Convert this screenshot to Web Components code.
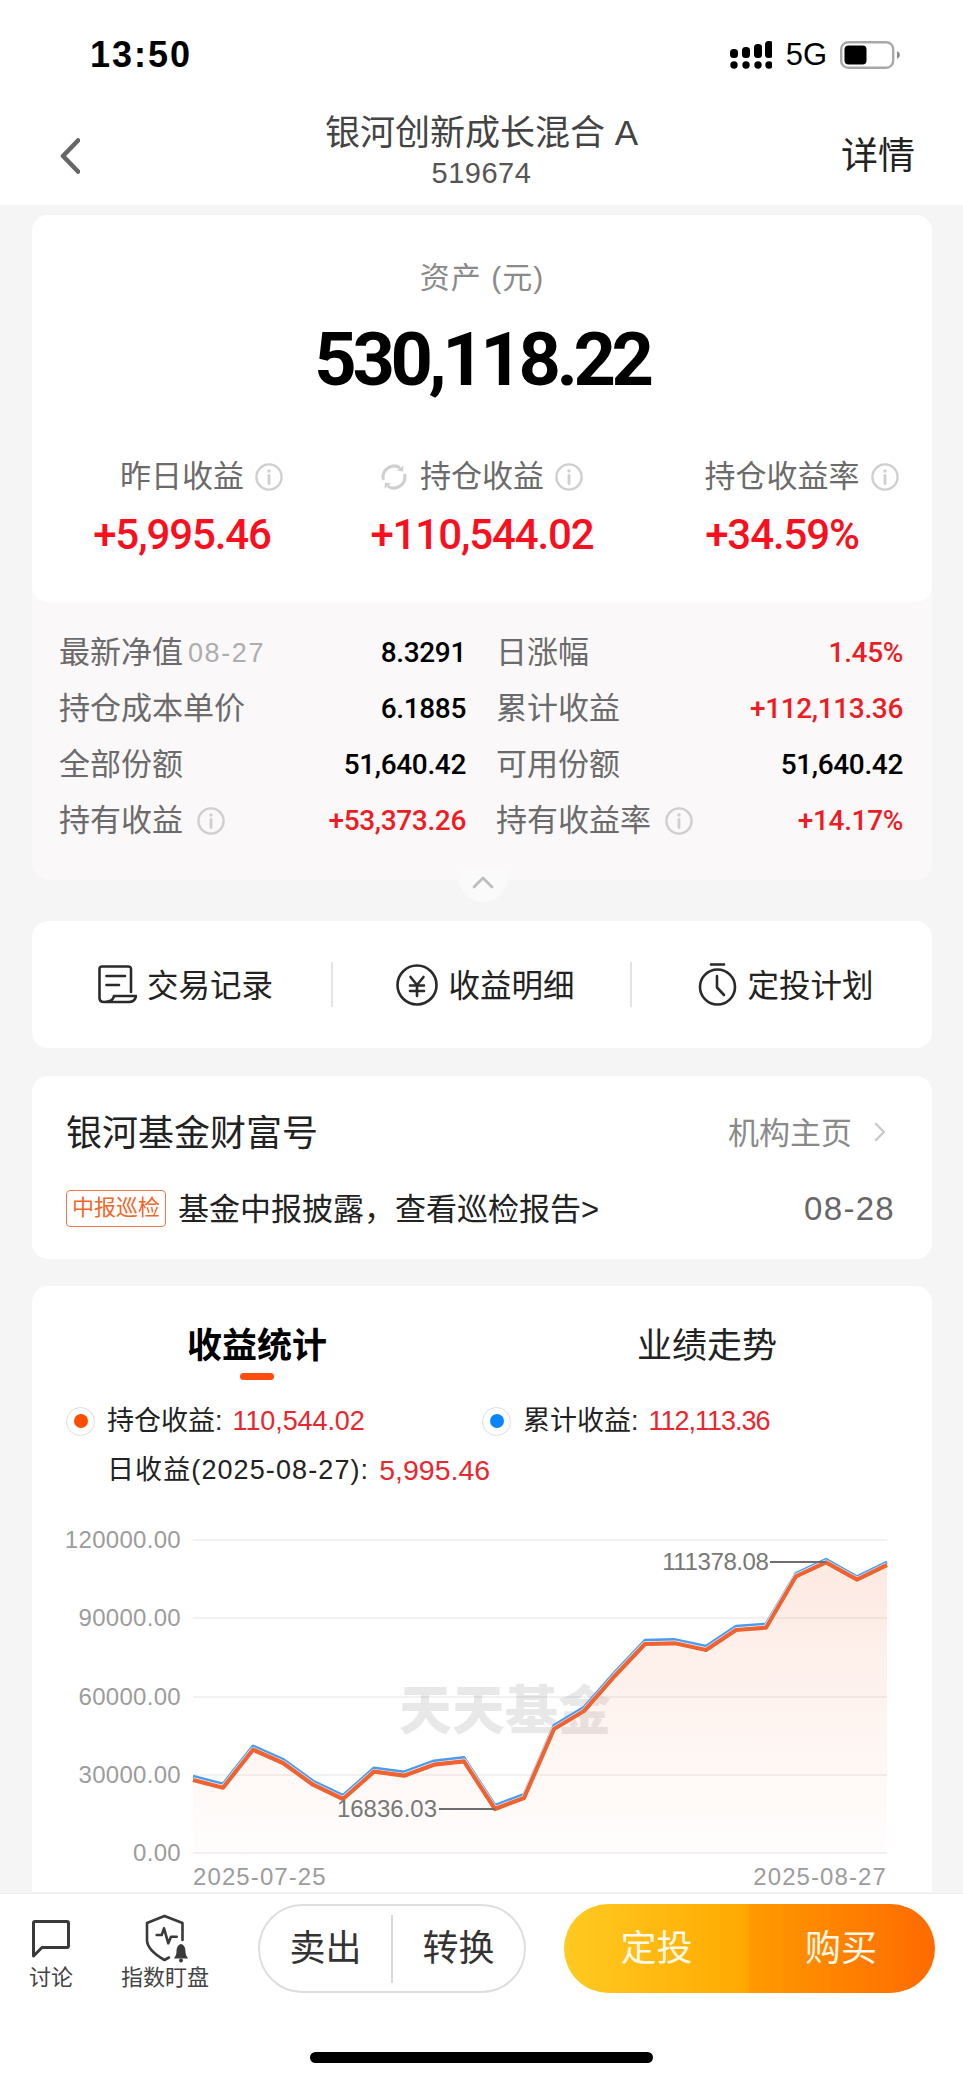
<!DOCTYPE html>
<html lang="zh-CN">
<head>
<meta charset="utf-8">
<title>银河创新成长混合 A</title>
<style>
  html, body { margin: 0; padding: 0; background: #f5f5f5; }
  body { font-family: "Liberation Sans", "Noto Sans CJK SC", sans-serif; }
</style>
</head>
<body>
<fund-screen></fund-screen>

<script>
const sans = '"Liberation Sans", "Noto Sans CJK SC", sans-serif';
const digits = 'Roboto, "Noto Sans CJK SC", sans-serif';

class InfoDot extends HTMLElement {
  constructor() {
    super();
    this.attachShadow({mode: 'open'}).innerHTML = `
      <style>:host { display: inline-flex; width: 28px; height: 28px; flex: none; }</style>
      <svg width="28" height="28" viewBox="0 0 28 28" fill="none" stroke="#cfcfcf">
        <circle cx="14" cy="14" r="12.6" stroke-width="2.4"/>
        <path d="M14 12.5V20.5" stroke-width="2.8" stroke-linecap="round"/>
        <circle cx="14" cy="8" r="1.7" fill="#cfcfcf" stroke="none"/>
      </svg>`;
  }
}
customElements.define('info-dot', InfoDot);

class StatusBar extends HTMLElement {
  constructor() {
    super();
    this.attachShadow({mode: 'open'}).innerHTML = `
      <style>
        :host { display: flex; align-items: center; height: 74px; padding: 18px 63px 0 90px; background: #fff; font-family: ${sans}; color: #000; }
        .time { font-size: 36px; font-weight: 700; flex: 1; letter-spacing: 2px; }
        .net { font-size: 31px; margin: 0 13px 0 14px; }
        svg { display: block; }
      </style>
      <span class="time">13:50</span>
      <svg width="42" height="28" viewBox="0 0 42 28" fill="#000">
        <rect x="0" y="8" width="8" height="9" rx="3.5"/><rect x="12" y="6" width="8" height="11" rx="3.5"/>
        <rect x="24" y="3" width="8" height="14" rx="3.5"/><rect x="35" y="0" width="8" height="17" rx="3.5"/>
        <circle cx="4" cy="24" r="3.7"/><circle cx="16" cy="24" r="3.7"/><circle cx="28" cy="24" r="3.7"/><circle cx="39" cy="24" r="3.7"/>
      </svg>
      <span class="net">5G</span>
      <svg width="60" height="28" viewBox="0 0 60 28">
        <rect x="1.2" y="1.2" width="52" height="25.6" rx="7" fill="none" stroke="#a8a8a8" stroke-width="2.4"/>
        <rect x="4.5" y="4.5" width="22" height="19" rx="4" fill="#000"/>
        <path d="M57 10V18Q60 16.5 60 14Q60 11.500 57 10Z" fill="#8a8a8a"/>
      </svg>`;
  }
}
customElements.define('status-bar', StatusBar);

class NavHeader extends HTMLElement {
  constructor() {
    super();
    this.attachShadow({mode: 'open'}).innerHTML = `
      <style>
        :host { display: grid; grid-template-columns: 1fr auto 1fr; height: 94px; padding-top: 19px; background: #fff; font-family: ${sans}; }
        .back { margin: 27px 0 0 60px; }
        .mid { text-align: center; }
        .name { font-size: 35px; line-height: 44px; color: #444; }
        .code { font-size: 29px; line-height: 36px; color: #555; letter-spacing: .5px; }
        .more { justify-self: end; margin: 23px 48px 0 0; font-size: 37px; line-height: 46px; color: #222; }
      </style>
      <svg class="back" width="20" height="36" viewBox="0 0 20 36" fill="none" stroke="#666" stroke-width="4.6" stroke-linecap="round" stroke-linejoin="round"><path d="M18 2.500L3 18L18 33.500"/></svg>
      <div class="mid"><div class="name"><slot name="name"></slot></div><div class="code"><slot name="code"></slot></div></div>
      <div class="more">详情</div>`;
  }
}
customElements.define('nav-header', NavHeader);

class StatCell extends HTMLElement {
  constructor() {
    super();
    const spin = this.hasAttribute('spin') ? `
      <svg width="30" height="30" viewBox="0 0 30 30" fill="none" stroke="#cfcfcf" stroke-width="3">
        <path d="M4.500 18A11 11 0 0 1 21 5.800"/><path d="M25.500 12A11 11 0 0 1 9 24.200"/>
        <path d="M24.500 3.500L24 9.500L18 8.500Z" fill="#cfcfcf" stroke="none"/><path d="M5.500 26.500L6 20.500L12 21.500Z" fill="#cfcfcf" stroke="none"/>
      </svg>` : '';
    this.attachShadow({mode: 'open'}).innerHTML = `
      <style>
        :host { display: block; font-family: ${sans}; }
        .top { display: grid; grid-template-columns: 1fr auto 1fr; align-items: center; height: 40px; column-gap: 11px; }
        .pre { justify-self: end; display: flex; }
        .label { font-size: 31px; line-height: 40px; color: #6b6b6b; }
        .val { margin-top: 13px; text-align: center; font-family: ${digits}; font-size: 42px; line-height: 50px; font-weight: 500; letter-spacing: -1.1px; color: #fa0f1e; }
      </style>
      <div class="top"><span class="pre">${spin}</span><span class="label">${this.getAttribute('label')}</span><info-dot></info-dot></div>
      <div class="val">${this.getAttribute('value')}</div>`;
  }
}
customElements.define('stat-cell', StatCell);

class DetailItem extends HTMLElement {
  constructor() {
    super();
    const note = this.getAttribute('note');
    const info = this.hasAttribute('info') ? '<info-dot></info-dot>' : '';
    const tone = this.getAttribute('tone') === 'red' ? '#ee1c25' : '#000';
    this.attachShadow({mode: 'open'}).innerHTML = `
      <style>
        :host { display: flex; align-items: center; height: 56px; font-family: ${sans}; }
        span { line-height: 40px; }
        .label { font-size: 31px; color: #6b6b6b; }
        .note { font-size: 27px; color: #adadad; margin-left: 5px; letter-spacing: 1.6px; }
        info-dot { margin-left: 14px; }
        .val { margin-left: auto; font-family: ${digits}; font-size: 28px; font-weight: 500; letter-spacing: -.35px; color: ${tone}; }
      </style>
      <span class="label">${this.getAttribute('label')}</span>
      ${note ? `<span class="note">${note}</span>` : ''}${info}
      <span class="val">${this.getAttribute('value')}</span>`;
  }
}
customElements.define('detail-item', DetailItem);

class AssetCard extends HTMLElement {
  constructor() {
    super();
    this.attachShadow({mode: 'open'}).innerHTML = `
      <style>
        :host { display: block; position: relative; border-radius: 16px; background: #faf8f9; font-family: ${sans}; }
        .top { background: #fff; border-radius: 16px; padding: 43px 0 42px; text-align: center; }
        .cap { font-size: 30px; line-height: 40px; letter-spacing: 1px; color: #8a8a8a; }
        .total { margin-top: 22px; font-family: ${digits}; font-weight: 700; font-size: 74px; line-height: 80px; letter-spacing: -4.4px; color: #000; }
        .stats { display: grid; grid-template-columns: repeat(3, 300px); margin-top: 57px; }
        .more { display: grid; grid-template-columns: 407px 407px; column-gap: 30px; padding: 23px 29px 31px 27px; }
        .fold { position: absolute; left: 426px; top: 100%; margin-top: -12px; width: 50px; height: 34px; border-radius: 0 0 25px 25px; background: #fafafa; }
        .fold svg { position: absolute; left: 14px; top: 8px; }
      </style>
      <div class="top">
        <div class="cap">资产 (元)</div>
        <div class="total">530,118.22</div>
        <div class="stats">
          <stat-cell label="昨日收益" value="+5,995.46"></stat-cell>
          <stat-cell label="持仓收益" value="+110,544.02" spin></stat-cell>
          <stat-cell label="持仓收益率" value="+34.59%"></stat-cell>
        </div>
      </div>
      <div class="more"><slot></slot></div>
      <div class="fold"><svg width="22" height="13" viewBox="0 0 22 13" fill="none" stroke="#bdbdbd" stroke-width="2.8" stroke-linecap="round" stroke-linejoin="round"><path d="M2 11L11 2L20 11"/></svg></div>`;
  }
}
customElements.define('asset-card', AssetCard);

class ActionBar extends HTMLElement {
  constructor() {
    super();
    this.attachShadow({mode: 'open'}).innerHTML = `
      <style>
        :host { display: flex; align-items: center; height: 127px; margin-top: 41px; background: #fff; border-radius: 16px; font-family: ${sans}; }
        .cell { display: flex; align-items: center; justify-content: center; gap: 10px; width: 299px; height: 45px; padding-left: 8px; box-sizing: border-box; font-size: 31.5px; line-height: 40px; color: #222; }
        .cell:last-child { width: 302px; }
        .cell + .cell { border-left: 2px solid #e4e4e4; }
        .cell b { font-weight: 400; padding-top: 2px; }
      </style>
      <div class="cell">
        <svg width="39" height="39" viewBox="0 0 39 39" fill="none" stroke="#2a2a2a" stroke-width="2.6" stroke-linecap="round" stroke-linejoin="round">
          <path d="M33 27V4Q33 1.500 30 1.500H4Q1.500 1.500 1.500 4V33Q1.500 37 6 37H31Q37 37 38 31H16Q15 37 6 37"/>
          <path d="M8.500 11H27M8.500 20H21"/>
        </svg><b>交易记录</b></div>
      <div class="cell">
        <svg width="42" height="42" viewBox="0 0 42 42" fill="none" stroke="#2a2a2a" stroke-width="2.600" stroke-linecap="round" stroke-linejoin="round">
          <circle cx="21" cy="21" r="19.500"/>
          <path d="M14.500 13L21 21L27.500 13M14 21.500H28M14 27H28M21 21.500V32"/>
        </svg><b>收益明细</b></div>
      <div class="cell">
        <svg width="39" height="43" viewBox="0 0 39 43" fill="none" stroke="#2a2a2a" stroke-width="2.600" stroke-linecap="round" stroke-linejoin="round">
          <path d="M13 1.500H26"/><circle cx="19.500" cy="24" r="17.500"/><path d="M19 13V24.500L26 32"/>
        </svg><b>定投计划</b></div>`;
  }
}
customElements.define('action-bar', ActionBar);

class OrgCard extends HTMLElement {
  constructor() {
    super();
    this.attachShadow({mode: 'open'}).innerHTML = `
      <style>
        :host { display: block; margin-top: 28px; padding: 31px 37px 32px 34px; background: #fff; border-radius: 16px; font-family: ${sans}; }
        .head { display: flex; align-items: center; height: 50px; padding-right: 9px; }
        .title { flex: 1; font-size: 36px; line-height: 50px; padding-top: 4px; color: #222; }
        .link { font-size: 31px; line-height: 40px; padding-top: 3px; color: #8a8a8a; margin-right: 22px; }
        .notice { display: flex; align-items: center; height: 37px; margin-top: 33px; }
        .tag { width: 100px; height: 37px; box-sizing: border-box; border: 1.500px solid #f3784a; border-radius: 4px; font-size: 22px; line-height: 34px; text-align: center; color: #f2662a; margin-right: 12px; }
        .msg { flex: 1; font-size: 31px; line-height: 37px; padding-top: 2px; color: #222; white-space: nowrap; }
        .date { font-size: 33px; line-height: 37px; color: #666; letter-spacing: 1.300px; }
      </style>
      <div class="head"><span class="title">银河基金财富号</span><span class="link">机构主页</span>
        <svg width="12" height="20" viewBox="0 0 12 20" fill="none" stroke="#c9c9c9" stroke-width="2.400" stroke-linecap="round" stroke-linejoin="round"><path d="M2 2L10 10L2 18"/></svg>
      </div>
      <div class="notice"><span class="tag">中报巡检</span><span class="msg">基金中报披露，查看巡检报告&gt;</span><span class="date">08-28</span></div>`;
  }
}
customElements.define('org-card', OrgCard);

const orange = [[193,1781],[223,1788.7],[253,1750.7],[283,1764],[313,1785.7],[343,1800],[374,1772.7],[404,1776.7],[434,1765.7],[464,1762.3],[495,1810],[524,1799],[554,1730],[584,1712],[615,1676.7],[645,1645],[675,1644.3],[706,1651],[736,1631],[766,1628.7],[796,1577.3],[826,1563.3],[857,1580.7],[887,1566]];

class ChartCard extends HTMLElement {
  constructor() {
    super();
    const line = orange.map(p => p.join(',')).join(' ');
    const blue = orange.map((p, i) => p[0] + ',' + (p[1] - (i > 19 ? 3 : 3.7))).join(' ');
    const grid = [[1541,'120000.00'],[1619,'90000.00'],[1698,'60000.00'],[1776,'30000.00'],[1854,'0.00']];
    this.attachShadow({mode: 'open'}).innerHTML = `
      <style>
        :host { display: block; margin-top: 27px; background: #fff; border-radius: 16px 16px 0 0; font-family: ${sans}; }
        .tabs { display: grid; grid-template-columns: 450px 450px; padding-top: 37px; text-align: center; font-size: 35px; line-height: 46px; color: #222; }
        .tabs b { display: block; color: #000; }
        .bar { width: 34px; height: 7px; margin: 4px auto 0; border-radius: 4px; background: #ff4d0d; }
        .legend { display: grid; grid-template-columns: 416px 1fr; margin: 21px 0 0 34px; font-size: 27px; line-height: 40px; color: #222; }
        .item { display: flex; align-items: center; }
        .ring { width: 29px; height: 29px; box-sizing: border-box; border: 1.500px solid #dcdcdc; border-radius: 50%; display: flex; align-items: center; justify-content: center; margin-right: 12px; }
        .ring i { width: 14px; height: 14px; border-radius: 50%; }
        .num { color: #e8282e; margin-left: 10px; }
        .daily { margin: 9px 0 0 75px; display: flex; font-size: 27px; line-height: 40px; color: #222; }
        .daily span:first-child { letter-spacing: 1.1px; }
        .daily .num { font-size: 28.5px; }
        svg { display: block; }
        text { font-family: ${sans}; font-size: 24px; }
      </style>
      <div class="tabs"><div><b>收益统计</b><div class="bar"></div></div><div>业绩走势</div></div>
      <div class="legend">
        <div class="item"><span class="ring"><i style="background:#ff4d00"></i></span>持仓收益:<span class="num" style="letter-spacing:-.1px">110,544.02</span></div>
        <div class="item"><span class="ring"><i style="background:#0a84ff"></i></span>累计收益:<span class="num" style="letter-spacing:-1px">112,113.36</span></div>
      </div>
      <div class="daily"><span>日收益(2025-08-27):</span><span class="num">5,995.46</span></div>
      <svg width="900" height="402" viewBox="32 1491 900 402">
        <defs><linearGradient id="fill" gradientUnits="userSpaceOnUse" x1="0" y1="1563" x2="0" y2="1854">
          <stop offset="0" stop-color="#f0622f" stop-opacity=".14"/><stop offset="1" stop-color="#f0622f" stop-opacity=".01"/>
        </linearGradient></defs>
        ${grid.map(g => `<line x1="193" x2="887" y1="${g[0]}" y2="${g[0]}" stroke="#eeeeee" stroke-width="1.500"/><text x="181" y="${g[0] + 8}" text-anchor="end" fill="#9c9c9c" style="letter-spacing:.3px">${g[1]}</text>`).join('')}
        <text x="399" y="1731" style="font-family:'Noto Sans CJK SC',sans-serif;font-size:53px;font-weight:900" fill="#000" fill-opacity=".09">天天基金</text>
        <polygon points="193,1854 ${line} 887,1854" fill="url(#fill)"/>
        <polyline points="${blue}" fill="none" stroke="#4a9bed" stroke-width="3" stroke-linejoin="round"/>
        <polyline points="${line}" fill="none" stroke="#fff" stroke-opacity=".85" stroke-width="5.500" stroke-linejoin="round"/>
        <polyline points="${line}" fill="none" stroke="#f0622f" stroke-width="4.200" stroke-linejoin="round"/>
        <text x="437" y="1818" text-anchor="end" fill="#777">16836.03</text>
        <line x1="439" x2="495" y1="1810" y2="1810" stroke="#6e6e6e" stroke-width="2"/>
        <text x="768.500" y="1571" text-anchor="end" fill="#777" style="letter-spacing:-.4px">111378.08</text>
        <line x1="770" x2="826" y1="1563" y2="1563" stroke="#6e6e6e" stroke-width="2"/>
        <text x="193" y="1885.500" fill="#9c9c9c" style="letter-spacing:1.100px">2025-07-25</text>
        <text x="887" y="1885.500" text-anchor="end" fill="#9c9c9c" style="letter-spacing:1.100px">2025-08-27</text>
      </svg>`;
  }
}
customElements.define('chart-card', ChartCard);

class BottomBar extends HTMLElement {
  constructor() {
    super();
    this.attachShadow({mode: 'open'}).innerHTML = `
      <style>
        :host { display: block; height: 188px; border-top: 1px solid #eee; background: #fff; font-family: ${sans}; }
        .row { display: flex; height: 89px; margin-top: 10px; padding-left: 30px; }
        .tool { display: flex; flex-direction: column; align-items: center; width: 42px; padding-top: 10px; font-size: 22px; line-height: 28px; color: #444; white-space: nowrap; }
        .tool:nth-child(2) { width: 86px; }
        .tool svg { display: block; margin-bottom: 2px; overflow: visible; flex: none; }
        .tool + .tool { margin-left: 50px; }
        .pill { display: flex; align-items: center; width: 268px; height: 89px; box-sizing: border-box; margin-left: 50px; border: 2px solid #dedede; border-radius: 45px; font-size: 36px; line-height: 68px; color: #333; }
        .pill span { flex: 1; text-align: center; }
        .pill span + span { border-left: 2px solid #d8d8d8; }
        .buy { display: flex; width: 371px; height: 89px; margin-left: 38px; border-radius: 45px; overflow: hidden; font-size: 36px; line-height: 89px; text-align: center; color: #fff8e6; }
        .buy span:first-child { width: 185px; background: linear-gradient(90deg, #ffca22, #ffa900); }
        .buy span:last-child { flex: 1; padding-right: 2px; background: linear-gradient(90deg, #ff9a00, #ff6a00); }
        .home { width: 343px; height: 11px; margin: 59px auto 0; border-radius: 6px; background: #000; }
      </style>
      <div class="row">
        <div class="tool">
          <svg width="42" height="48" viewBox="0 0 42 48" fill="none" stroke="#3a3a3a" stroke-width="3" stroke-linejoin="round"><path d="M3.500 42V9Q3.500 7.500 5 7.500H37Q38.500 7.500 38.500 9V32Q38.500 33.500 37 33.500H12Z"/></svg>
          讨论</div>
        <div class="tool">
          <svg width="86" height="48" viewBox="0 0 86 48" fill="none" stroke="#3a3a3a" stroke-width="2.600" stroke-linecap="round" stroke-linejoin="round">
            <path d="M60.500 26V9L42.500 2L25 9V26Q25 36 42.500 46L47 43.500"/>
            <path d="M34.700 21H39.700L42 14.300L46.300 29.300L49 22.700H54.700"/>
            <path d="M59 30C55 31 54.500 35 54.500 38C54.500 41 53 42.500 52 44.500H66C65 42.500 63.500 41 63.500 38C63.500 35 63 31 59 30Z" fill="#3a3a3a" stroke="none"/>
            <circle cx="59" cy="46.500" r="2" fill="#3a3a3a" stroke="none"/>
          </svg>
          指数盯盘</div>
        <div class="pill"><span>卖出</span><span>转换</span></div>
        <div class="buy"><span>定投</span><span>购买</span></div>
      </div>
      <div class="home"></div>`;
  }
}
customElements.define('bottom-bar', BottomBar);

class FundScreen extends HTMLElement {
  constructor() {
    super();
    this.attachShadow({mode: 'open'}).innerHTML = `
      <style>
        :host { display: flex; flex-direction: column; width: 963px; height: 2082px; overflow: hidden; background: #f5f5f5; }
        main { flex: 1; min-height: 0; overflow: hidden; padding: 10px 31px 0 32px; }
      </style>
      <status-bar></status-bar>
      <nav-header><span slot="name">银河创新成长混合 A</span><span slot="code">519674</span></nav-header>
      <main>
        <asset-card>
          <detail-item label="最新净值" note="08-27" value="8.3291"></detail-item>
          <detail-item label="日涨幅" value="1.45%" tone="red"></detail-item>
          <detail-item label="持仓成本单价" value="6.1885"></detail-item>
          <detail-item label="累计收益" value="+112,113.36" tone="red"></detail-item>
          <detail-item label="全部份额" value="51,640.42"></detail-item>
          <detail-item label="可用份额" value="51,640.42"></detail-item>
          <detail-item label="持有收益" value="+53,373.26" tone="red" info></detail-item>
          <detail-item label="持有收益率" value="+14.17%" tone="red" info></detail-item>
        </asset-card>
        <action-bar></action-bar>
        <org-card></org-card>
        <chart-card></chart-card>
      </main>
      <bottom-bar></bottom-bar>`;
  }
}
customElements.define('fund-screen', FundScreen);
</script>
</body>
</html>
